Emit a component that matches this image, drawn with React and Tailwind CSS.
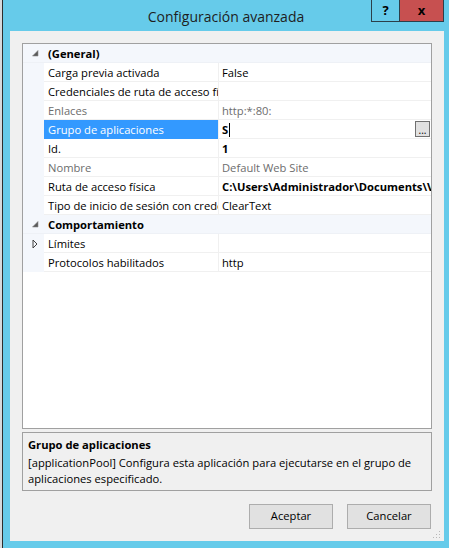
const font = { fontFamily: '"Open Sans", "Noto Sans", sans-serif' };

const rows = [
  { type: 'cat', name: '(General)' },
  { name: 'Carga previa activada', value: 'False' },
  { name: 'Credenciales de ruta de acceso física', value: '' },
  { name: 'Enlaces', value: 'http:*:80:', dim: true },
  { name: 'Grupo de aplicaciones', value: 'S', bold: true, selected: true },
  { name: 'Id.', value: '1', bold: true },
  { name: 'Nombre', value: 'Default Web Site', dim: true },
  { name: 'Ruta de acceso física', value: 'C:\\Users\\Administrador\\Documents\\Visual Studio', bold: true },
  { name: 'Tipo de inicio de sesión con credenciales', value: 'ClearText' },
  { type: 'cat', name: 'Comportamiento' },
  { name: 'Límites', value: '', collapsed: true },
  { name: 'Protocolos habilitados', value: 'http' },
];

function ExpandedGlyph() {
  return (
    <svg width="7" height="7" viewBox="0 0 7 7">
      <polygon points="6,0.5 6,6 0.5,6" fill="#595959" stroke="#8a8a8a" strokeWidth="0.6" />
    </svg>
  );
}

function CollapsedGlyph() {
  return (
    <svg width="6" height="10" viewBox="0 0 6 10">
      <polygon points="1,1 5,5 1,9" fill="none" stroke="#404040" strokeWidth="1" />
    </svg>
  );
}

function Row({ row }) {
  if (row.type === 'cat') {
    return (
      <div className="h-[19px] flex items-center bg-[#f4f7fc] border-b border-[#eef1f6]">
        <div className="w-[21px] h-full flex items-center justify-end pr-[5px]">
          <ExpandedGlyph />
        </div>
        <span className="pl-[4px] pt-[2px] font-bold text-black">{row.name}</span>
      </div>
    );
  }
  return (
    <div className="h-[19px] flex">
      <div className="w-[21px] h-full bg-[#f4f7fc] flex items-center justify-end pr-[6px]">
        {row.collapsed && <CollapsedGlyph />}
      </div>
      <div
        className={`w-[174px] h-full flex items-center pl-[4px] pt-[2px] whitespace-nowrap overflow-hidden border-b ${
          row.selected ? 'bg-[#3399ff] text-white border-[#3399ff]' : 'bg-white border-[#f0f0f0]'
        } ${row.dim ? 'text-[#6d6d6d]' : row.selected ? '' : 'text-black'}`}
      >
        {row.name}
      </div>
      <div className="w-[1px] h-full bg-[#f0f0f0]" />
      <div
        className={`flex-1 h-full flex items-center pl-[3px] whitespace-nowrap overflow-hidden bg-white border-b border-[#f0f0f0] ${
          row.bold ? 'font-bold' : ''
        } ${row.dim ? 'text-[#6d6d6d]' : 'text-black'}`}
      >
        <span className="pt-[2px]">{row.value}</span>
        {row.selected && (
          <>
            <span className="w-[1px] h-[14px] bg-black ml-[1px] mt-[1px]" />
            <span className="flex-1" />
            <span className="w-[15px] h-[16px] mr-[1px] border border-[#707070] bg-[#e1e1e1] flex items-end justify-center font-normal text-[10px] leading-[12px] text-black">
              ...
            </span>
          </>
        )}
      </div>
    </div>
  );
}

export default function App() {
  return (
    <div className="w-[449px] h-[551px] overflow-hidden bg-white flex text-[11.2px]" style={font}>
      <div className="w-[2px] h-[548px] bg-[#d6d9dc]" />
      <div className="w-[447px] h-[548px] bg-[#66cbea] border-l border-[#2d2d2d] flex flex-col">
        {/* barra de título */}
        <div className="relative h-[31px] flex items-center justify-center">
          <span className="text-[14px] text-[#1e1e1e] pt-[1px]">Configuración avanzada</span>
          <div className="absolute top-0 right-[5px] flex">
            <div className="w-[29px] h-[22px] border border-t-0 border-[#2b3f4a] flex items-center justify-center font-bold text-[13px] text-black">
              ?
            </div>
            <div className="w-[44px] h-[22px] border border-t-0 border-l-0 border-[#2b3f4a] bg-[#c75050] flex items-center justify-center font-bold text-[13px] text-black">
              x
            </div>
          </div>
        </div>

        {/* área de cliente */}
        <div className="relative ml-[7px] mr-[5px] h-[510px] bg-[#f0f0f0] flex flex-col px-[12px] pt-[12px] pb-[12px]">
          <div className="h-[386px] border border-[#a0a0a0] bg-white flex flex-col">
            {rows.map((r, i) => (
              <Row key={i} row={r} />
            ))}
          </div>

          <div className="mt-[3px] h-[59px] border border-[#a0a0a0] px-[5px] pt-[4px] leading-[16px] text-black">
            <div className="font-bold">Grupo de aplicaciones</div>
            <div className="mt-[2px]">
              [applicationPool] Configura esta aplicación para ejecutarse en el grupo de aplicaciones especificado.
            </div>
          </div>

          <div className="mt-[13px] flex justify-end gap-[14px] pr-[1px]">
            <button className="w-[84px] h-[25px] bg-[#e1e1e1] border border-[#adadad] text-black">Aceptar</button>
            <button className="w-[84px] h-[25px] bg-[#e1e1e1] border border-[#adadad] text-black">Cancelar</button>
          </div>

          <svg className="absolute right-[3px] bottom-[2px]" width="8" height="8" viewBox="0 0 8 8">
            <rect x="6" y="0" width="1" height="1" fill="#b8b8b8" />
            <rect x="3" y="3" width="1" height="1" fill="#b8b8b8" />
            <rect x="6" y="3" width="1" height="1" fill="#b8b8b8" />
            <rect x="0" y="6" width="1" height="1" fill="#b8b8b8" />
            <rect x="3" y="6" width="1" height="1" fill="#b8b8b8" />
            <rect x="6" y="6" width="1" height="1" fill="#b8b8b8" />
          </svg>
        </div>
      </div>
    </div>
  );
}
